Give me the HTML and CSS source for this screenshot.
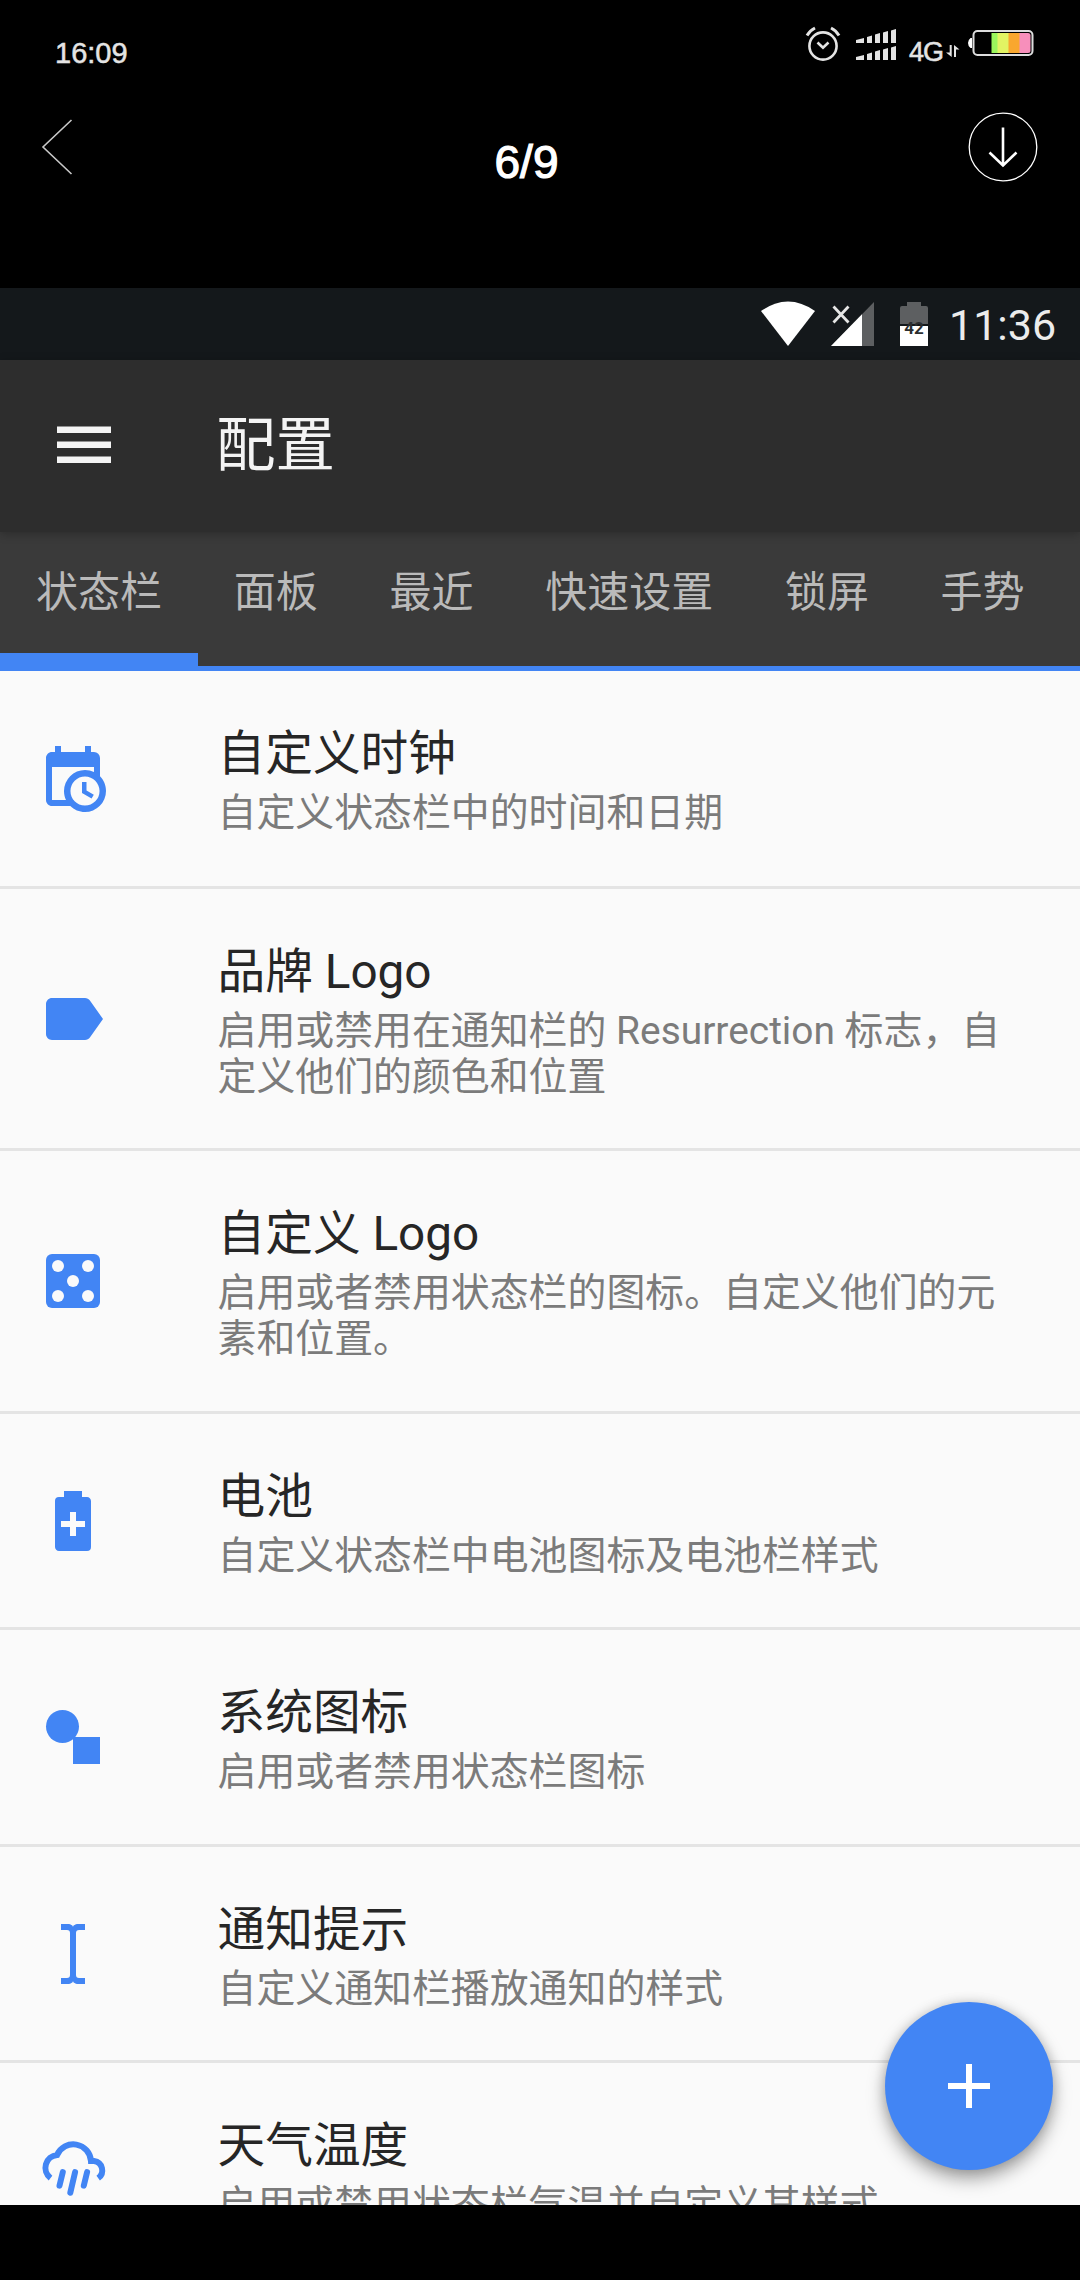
FILE: index.html
```html
<!DOCTYPE html>
<html lang="zh-CN">
<head>
<meta charset="utf-8">
<title>配置</title>
<link rel="stylesheet" href="styles.css">
</head>
<body>
<div class="viewer">
  <div class="phone-status">
    <span class="phone-time">16:09</span>
    <div class="phone-icons">
      <svg class="alarm" width="36" height="36" viewBox="0 0 36 36" fill="none" stroke="#e4e4e4">
        <circle cx="18" cy="20" r="13.600" stroke-width="2.600"/>
        <path d="M12.500 16.500l5.500 5.300 5.500-5.300" stroke-width="2.600"/>
        <path d="M2 9.500Q5 4.500 10 2M34 9.500Q31 4.500 26 2" stroke-width="3"/>
      </svg>
      <svg class="signal" width="40" height="32" viewBox="0 0 40 32" fill="#e4e4e4">
        <path d="M0 11l8-2v5H0zM11 8l5-1.500V14h-5zM19 5.500L24 4v10h-5zM27 3.500L32 2v12h-5zM35 1.500L40 0v14h-5z"/>
        <path d="M0 28l8-2v5H0zM11 25l5-1.500V31h-5zM19 22.500l5-1.500v10h-5zM27 20.500l5-1.500v12h-5zM35 18.500l5-1.500v14h-5z"/>
      </svg>
      <span class="network">4G</span>
      <svg class="arrows" width="14" height="14" viewBox="0 0 14 14" fill="#e4e4e4">
        <path d="M3.700 1h2v12L0 8.500h3.700zM8 13h2V5.500h3.500L8 1z"/>
      </svg>
      <svg class="phone-battery" width="66" height="28" viewBox="0 0 66 28">
        <path d="M4 9v10H2.500Q0 17 0 14t2.500-5z" fill="#fff"/>
        <rect x="5.500" y="2" width="59" height="24" rx="4" fill="#000" stroke="#ddd" stroke-width="2"/>
        <path d="M23.500 4H30v20h-6.500z" fill="#9bf65c"/>
        <path d="M29.500 4H41v20H29.500z" fill="#e2f463"/>
        <path d="M40.500 4H52v20H40.500z" fill="#f9a72e"/>
        <path d="M51.500 4H60q2.500 0 2.500 2.500v15Q62.500 24 60 24h-8.500z" fill="#f78fbb"/>
      </svg>
    </div>
  </div>
  <div class="viewer-bar">
    <svg width="34" height="60" viewBox="0 0 34 60" fill="none" stroke="#c8c8c8" stroke-width="1.600">
      <path d="M31.500 3L3 30l28.500 27"/>
    </svg>
    <span class="counter">6/9</span>
    <svg width="70" height="70" viewBox="0 0 70 70" fill="none" stroke="#fff">
      <circle cx="35" cy="35" r="33.800" stroke-width="1.300"/>
      <path d="M35 15.500V53M21.500 40.500L35 53.500l13.500-13" stroke-width="2.600"/>
    </svg>
  </div>

  <div class="screen">
    <div class="status">
      <svg width="54" height="46" viewBox="0 0 54 46" fill="#fff">
        <path d="M0 10Q27-9 54 10L27 45z"/>
      </svg>
      <svg class="cell" width="44" height="46" viewBox="0 0 44 46">
        <path d="M43 1v44H0z" fill="#5d5f61"/>
        <path d="M31 13.300V45H0z" fill="#fff"/>
        <path d="M2.500 5.500l15 16M17.500 5.500l-15 16" stroke="#14181b" stroke-width="6"/>
        <path d="M2.500 5.500l15 16M17.500 5.500l-15 16" stroke="#e6e6e6" stroke-width="2.800"/>
      </svg>
      <svg class="cell-battery" width="28" height="46" viewBox="0 0 28 46">
        <path d="M7 1h14v4h5q2 0 2 2v16H0V7q0-2 2-2h5z" fill="#5d5f61"/>
        <path d="M0 25h28v20H0z" fill="#fff"/>
        <text class="battery-level" x="14" y="33" text-anchor="middle">42</text>
      </svg>
      <span class="clock">11:36</span>
    </div>
    <header class="app-bar">
      <svg width="56" height="42" viewBox="0 0 56 42" fill="#f4f4f4">
        <path d="M1 1.500h54v6.500H1zM1 16.500h54V23H1zM1 31.500h54V38H1z"/>
      </svg>
      <h1 class="title">配置</h1>
    </header>
    <nav class="tabs">
      <a class="tab active">状态栏</a><a class="tab">面板</a><a class="tab">最近</a><a class="tab">快速设置</a><a class="tab">锁屏</a><a class="tab">手势</a>
    </nav>
    <main class="list">
      <div class="row first">
        <svg class="icon" viewBox="0 0 24 24"><path d="M15,13H16.500V15.820L18.940,17.230L18.190,18.530L15,16.690V13M19,8H5V19H9.670C9.240,18.090 9,17.070 9,16A7,7 0 0,1 16,9C17.070,9 18.090,9.240 19,9.670V8M5,21C3.890,21 3,20.100 3,19V5C3,3.890 3.890,3 5,3H6V1H8V3H16V1H18V3H19A2,2 0 0,1 21,5V11.100C22.240,12.360 23,14.090 23,16A7,7 0 0,1 16,23C14.090,23 12.360,22.240 11.100,21H5M16,11.150A4.850,4.850 0 0,0 11.150,16C11.150,18.680 13.320,20.850 16,20.850A4.850,4.850 0 0,0 20.850,16C20.850,13.320 18.680,11.150 16,11.150Z"/></svg>
        <div class="text"><div class="name">自定义时钟</div><div class="desc">自定义状态栏中的时间和日期</div></div>
      </div>
      <div class="row tall">
        <svg class="icon" viewBox="0 0 24 24"><path d="M17.630 5.840C17.270 5.330 16.670 5 16 5L5 5.010C3.900 5.010 3 5.900 3 7v10c0 1.100.9 1.990 2 1.990L16 19c.67 0 1.270-.33 1.630-.84L22 12l-4.370-6.160z"/></svg>
        <div class="text"><div class="name">品牌 Logo</div><div class="desc">启用或禁用在通知栏的 Resurrection 标志，自<br>定义他们的颜色和位置</div></div>
      </div>
      <div class="row tall custom">
        <svg class="icon" viewBox="0 0 24 24"><rect x="3" y="3" width="18" height="18" rx="2"/><g fill="#fafafa"><circle cx="7" cy="7" r="2"/><circle cx="17" cy="7" r="2"/><circle cx="12" cy="12" r="2"/><circle cx="7" cy="17" r="2"/><circle cx="17" cy="17" r="2"/></g></svg>
        <div class="text"><div class="name">自定义 Logo</div><div class="desc">启用或者禁用状态栏的图标。自定义他们的元<br>素和位置。</div></div>
      </div>
      <div class="row">
        <svg class="icon" viewBox="0 0 24 24"><path d="M16.670,4H15V2H9V4H7.330A1.330,1.330 0 0,0 6,5.330V20.670C6,21.400 6.600,22 7.330,22H16.670A1.330,1.330 0 0,0 18,20.670V5.330C18,4.600 17.400,4 16.670,4M16,14H13V17H11V14H8V12H11V9H13V12H16V14"/></svg>
        <div class="text"><div class="name">电池</div><div class="desc">自定义状态栏中电池图标及电池栏样式</div></div>
      </div>
      <div class="row system">
        <svg class="icon" viewBox="0 0 24 24"><circle cx="8.500" cy="8.500" r="5.500"/><path d="M12 12h9v9h-9z"/></svg>
        <div class="text"><div class="name">系统图标</div><div class="desc">启用或者禁用状态栏图标</div></div>
      </div>
      <div class="row">
        <svg class="icon" viewBox="0 0 24 24"><path d="M13,19A1,1 0 0,0 14,20H16V22H13.500C12.950,22 12,21.550 12,21C12,21.550 11.050,22 10.500,22H8V20H10A1,1 0 0,0 11,19V5A1,1 0 0,0 10,4H8V2H10.500C11.050,2 12,2.450 12,3C12,2.450 12.950,2 13.500,2H16V4H14A1,1 0 0,0 13,5V19Z"/></svg>
        <div class="text"><div class="name">通知提示</div><div class="desc">自定义通知栏播放通知的样式</div></div>
      </div>
      <div class="row">
        <svg class="icon line" viewBox="0 0 24 24"><path d="M4.500 14.700A4.300 4.300 0 0 1 6.700 7 5.900 5.900 0 0 1 18 9H19A3.150 3.150 0 0 1 20.400 14.700"/><path class="rain" d="M8.600 12.700L7.500 17.200M12.700 12.700L11.100 19.600M16.700 12.700L15.600 17.200"/></svg>
        <div class="text"><div class="name">天气温度</div><div class="desc">启用或禁用状态栏气温并自定义其样式</div></div>
      </div>
    </main>
    <button class="fab" aria-label="添加">
      <svg width="44" height="44" viewBox="0 0 44 44" fill="none" stroke="#fff" stroke-width="6"><path d="M22 0v44M1 22h42"/></svg>
    </button>
  </div>
</div>
</body>
</html>
```
FILE: styles.css
```css
* {
  box-sizing: border-box;
}

body {
  margin: 0;
  background: #000;
  font-family: Roboto, "Noto Sans CJK SC", sans-serif;
}

svg {
  display: block;
  flex: none;
}

.viewer {
  width: 1080px;
  height: 2280px;
  overflow: hidden;
  background: #000;
}

.phone-status {
  height: 96px;
  padding: 0 46px 0 55px;
  display: flex;
  justify-content: space-between;
  color: #e4e4e4;
}

.phone-time {
  padding-top: 36px;
  font-family: "Liberation Sans", Roboto, sans-serif;
  font-size: 29px;
  line-height: 35px;
  -webkit-text-stroke: 0.5px #e4e4e4;
}

.phone-icons {
  display: flex;
  align-items: flex-start;
}

.alarm {
  margin-top: 26px;
}

.signal {
  margin: 29px 0 0 15px;
}

.network {
  margin: 35px 0 0 13px;
  width: 37px;
  font-family: "Liberation Sans", Roboto, sans-serif;
  font-size: 27px;
  line-height: 35px;
  letter-spacing: -1px;
  -webkit-text-stroke: 0.5px #e4e4e4;
}

.arrows {
  margin-top: 44px;
}

.phone-battery {
  margin: 29px 0 0 8px;
}

.viewer-bar {
  height: 192px;
  padding: 0 42px 0 40px;
  display: grid;
  grid-template-columns: 70px 1fr 70px;
  align-items: start;
}

.viewer-bar > svg {
  margin-top: 16px;
}

.viewer-bar > svg:first-child {
  margin-top: 21px;
}

.counter {
  margin-top: 39px;
  padding-right: 25px;
  text-align: center;
  color: #fff;
  font-family: "Liberation Sans", Roboto, sans-serif;
  font-size: 46px;
  line-height: 54px;
  -webkit-text-stroke: 1.2px #fff;
}

.screen {
  position: relative;
  height: 1917px;
  overflow: hidden;
  background: #fafafa;
}

.status {
  height: 72px;
  padding: 0 24px 0 761px;
  display: flex;
  align-items: center;
  background: #14181b;
}

.cell {
  margin-left: 16px;
}

.cell-battery {
  margin-left: 25px;
}

.battery-level {
  font-size: 17px;
  font-weight: 700;
  fill: #2b2e30;
}

.clock {
  margin-left: 21px;
  padding-top: 2px;
  color: #ececec;
  font-size: 43px;
  line-height: 50px;
}

.app-bar {
  position: relative;
  height: 172px;
  padding-left: 56px;
  display: flex;
  align-items: center;
  gap: 104px;
  background: #2d2d2d;
  box-shadow: 0 2px 9px rgba(0, 0, 0, 0.25);
}

.title {
  margin: 0;
  color: #f4f4f4;
  font-size: 59.500px;
  line-height: 72px;
  font-weight: 400;
}

.tabs {
  height: 139px;
  display: flex;
  border-bottom: 5px solid #4285f4;
  background: #3a3a3a;
}

.tab {
  height: 134px;
  padding: 31px 36px 0;
  color: #bababa;
  font-size: 42px;
  line-height: 60px;
  white-space: nowrap;
}

.tab + .tab {
  margin-left: -0.3px;
}

.active {
  border-bottom: 13px solid #4285f4;
}

.row {
  height: 216px;
  padding-left: 36.5px;
  display: flex;
  align-items: center;
  gap: 109px;
  border-bottom: 3px solid #e4e4e4;
}

.first {
  height: 218px;
}

.tall {
  height: 262px;
}

.custom {
  height: 263px;
}

.system {
  height: 217px;
}

.icon {
  width: 72px;
  height: 72px;
  fill: #4285f4;
}

.line {
  fill: none;
  stroke: #4285f4;
  stroke-width: 2;
}

.rain {
  stroke-linecap: round;
}

.text {
  align-self: flex-start;
  padding-top: 48px;
  white-space: nowrap;
}

.name {
  color: #262626;
  font-size: 47.700px;
  line-height: 70px;
}

.desc {
  padding-top: 1px;
  color: #7b7b7b;
  font-size: 38.900px;
  line-height: 46px;
}

.fab {
  position: absolute;
  right: 27px;
  bottom: 35px;
  width: 168px;
  height: 168px;
  padding: 0;
  display: flex;
  align-items: center;
  justify-content: center;
  border: 0;
  border-radius: 50%;
  background: #4285f4;
  box-shadow: 0 9px 18px rgba(0, 0, 0, 0.35), 0 0 12px rgba(0, 0, 0, 0.15);
}
```
